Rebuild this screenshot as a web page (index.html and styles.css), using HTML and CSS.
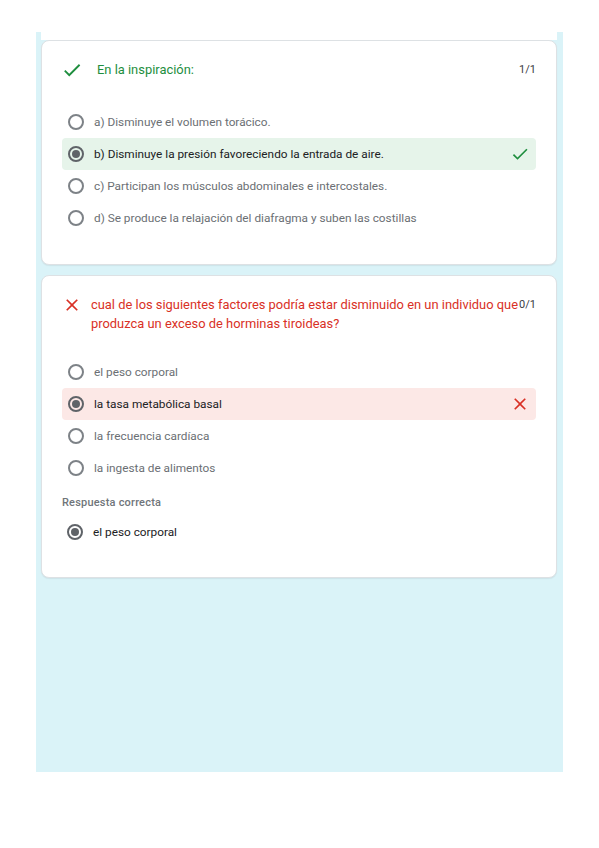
FILE: index.html
```html
<!DOCTYPE html>
<html lang="es">
<head>
<meta charset="utf-8">
<title>Quiz</title>
<link rel="stylesheet" href="styles.css">
</head>
<body>
<div class="panel">
  <div class="top-strip"></div>

  <section class="card">
    <div class="head head-ok">
      <svg class="head-icon" viewBox="0 0 24 24" width="22" height="22"><path fill="#1e8e3e" d="M9 16.17L4.83 12l-1.42 1.41L9 19 21 7l-1.41-1.41z"/></svg>
      <div class="title title-ok">En la inspiración:</div>
      <div class="score">1/1</div>
    </div>
    <div class="options">
      <div class="opt"><span class="radio"></span><span class="label">a) Disminuye el volumen torácico.</span></div>
      <div class="opt opt-right"><span class="radio radio-on"></span><span class="label label-sel">b) Disminuye la presión favoreciendo la entrada de aire.</span>
        <svg class="mark" viewBox="0 0 24 24" width="20" height="20"><path fill="#1e8e3e" d="M9 16.17L4.83 12l-1.42 1.41L9 19 21 7l-1.41-1.41z"/></svg></div>
      <div class="opt"><span class="radio"></span><span class="label">c) Participan los músculos abdominales e intercostales.</span></div>
      <div class="opt"><span class="radio"></span><span class="label">d) Se produce la relajación del diafragma y suben las costillas</span></div>
    </div>
  </section>

  <section class="card card-2">
    <div class="head head-bad">
      <svg class="head-icon head-x" viewBox="0 0 24 24" width="20" height="20"><path fill="#d93025" d="M19 6.41L17.59 5 12 10.59 6.41 5 5 6.41 10.59 12 5 17.59 6.41 19 12 13.41 17.59 19 19 17.59 13.41 12z"/></svg>
      <div class="title title-bad">cual de los siguientes factores podría estar disminuido en un individuo que produzca un exceso de horminas tiroideas?</div>
      <div class="score">0/1</div>
    </div>
    <div class="options">
      <div class="opt"><span class="radio"></span><span class="label">el peso corporal</span></div>
      <div class="opt opt-wrong"><span class="radio radio-on"></span><span class="label label-sel">la tasa metabólica basal</span>
        <svg class="mark" viewBox="0 0 24 24" width="20" height="20"><path fill="#d93025" d="M19 6.41L17.59 5 12 10.59 6.41 5 5 6.41 10.59 12 5 17.59 6.41 19 12 13.41 17.59 19 19 17.59 13.41 12z"/></svg></div>
      <div class="opt"><span class="radio"></span><span class="label">la frecuencia cardíaca</span></div>
      <div class="opt"><span class="radio"></span><span class="label">la ingesta de alimentos</span></div>
    </div>
    <div class="correct-label">Respuesta correcta</div>
    <div class="opt opt-answer"><span class="radio radio-on"></span><span class="label label-sel">el peso corporal</span></div>
  </section>
</div>
</body>
</html>
```

FILE: styles.css
```css
html, body {
  margin: 0;
  padding: 0;
  background: #ffffff;
}

body {
  font-family: Roboto, "Liberation Sans", Arial, sans-serif;
  color: #202124;
}

.panel {
  margin-top: 32px;
  margin-left: 36px;
  width: 527px;
  height: 740px;
  box-sizing: border-box;
  padding: 0 6px 0 5px;
  background: #daf3f8;
}

.top-strip {
  height: 8px;
  background: #ffffff;
}

.card {
  background: #ffffff;
  border: 1px solid #dde1e4;
  border-radius: 8px;
  box-shadow: 0 1px 1px rgba(60, 64, 67, 0.08);
  padding: 19px 20px 30px 20px;
}

.card-2 {
  margin-top: 10px;
  padding-bottom: 29px;
}

.head {
  display: flex;
  align-items: flex-start;
  margin-bottom: 25px;
}

.head-bad {
  margin-bottom: 23px;
}

.head-icon {
  flex: none;
  margin-top: -1px;
  margin-left: -1px;
}

.head-x {
  margin-left: 0;
  margin-top: 0;
}

.title {
  flex: 1;
  font-size: 12.9px;
  line-height: 19px;
}

.title-ok {
  color: #1e8e3e;
  margin-left: 14px;
}

.title-bad {
  color: #d93025;
  margin-left: 9px;
}

.score {
  flex: none;
  font-size: 11px;
  line-height: 19px;
  color: #3c4043;
}

.options {
  display: flex;
  flex-direction: column;
}

.opt {
  display: flex;
  align-items: center;
  height: 32px;
  padding: 0 6px;
  border-radius: 4px;
}

.opt-right {
  background: #e6f4ea;
}

.opt-wrong {
  background: #fce8e6;
}

.opt-answer {
  margin-top: 5px;
  padding-left: 5px;
}

.radio {
  flex: none;
  width: 16px;
  height: 16px;
  box-sizing: border-box;
  border: 2px solid #7d8287;
  border-radius: 50%;
  display: flex;
  align-items: center;
  justify-content: center;
}

.radio-on {
  border-color: #5f6368;
}

.radio-on::after {
  content: "";
  width: 8px;
  height: 8px;
  border-radius: 50%;
  background: #5f6368;
}

.label {
  flex: 1;
  margin-left: 10px;
  font-size: 11.8px;
  color: #6b6f74;
}

.label-sel {
  color: #202124;
}

.mark {
  flex: none;
}

.correct-label {
  margin-top: 11px;
  height: 16px;
  line-height: 16px;
  font-size: 11px;
  font-weight: 500;
  color: #70757a;
  letter-spacing: 0.2px;
}
```
